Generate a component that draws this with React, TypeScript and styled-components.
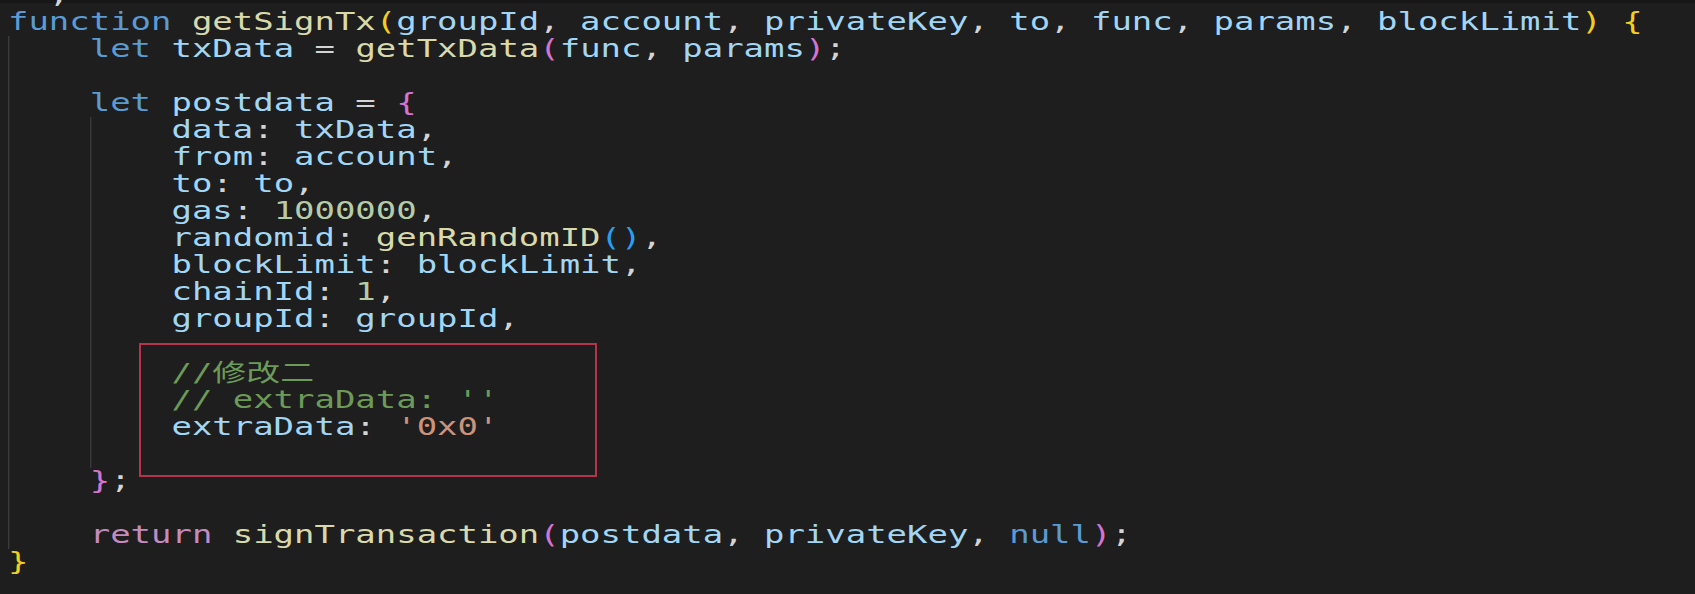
import React from "react";
import styled, { createGlobalStyle } from "styled-components";

const Global = createGlobalStyle`
  html, body {
    margin: 0;
    padding: 0;
    background: #1e1e1e;
    overflow: hidden;
  }
`;

type Kind = "kw" | "ctl" | "fn" | "v" | "p" | "b1" | "b2" | "b3" | "num" | "str" | "com";

const palette: Record<Kind, string> = {
  kw: "#5a9bd3",
  ctl: "#c38bbf",
  fn: "#d9d9ab",
  v: "#a2d6f5",
  p: "#d4d4d4",
  b1: "#f2cf1d",
  b2: "#d474d0",
  b3: "#2a9ef5",
  num: "#b6cca8",
  str: "#cc937a",
  com: "#6c9a58",
};

type Tok = [string, Kind];
interface CodeLine {
  g: number;
  t: Tok[];
}

const lines: CodeLine[] = [
  { g: 0, t: [["  ", "p"], [";", "p"]] },
  {
    g: 0,
    t: [
      ["function", "kw"], [" ", "p"], ["getSignTx", "fn"], ["(", "b1"],
      ["groupId", "v"], [", ", "p"], ["account", "v"], [", ", "p"],
      ["privateKey", "v"], [", ", "p"], ["to", "v"], [", ", "p"],
      ["func", "v"], [", ", "p"], ["params", "v"], [", ", "p"],
      ["blockLimit", "v"], [")", "b1"], [" ", "p"], ["{", "b1"],
    ],
  },
  {
    g: 1,
    t: [
      ["let", "kw"], [" ", "p"], ["txData", "v"], [" = ", "p"], ["getTxData", "fn"],
      ["(", "b2"], ["func", "v"], [", ", "p"], ["params", "v"], [")", "b2"], [";", "p"],
    ],
  },
  { g: 1, t: [] },
  { g: 1, t: [["let", "kw"], [" ", "p"], ["postdata", "v"], [" = ", "p"], ["{", "b2"]] },
  { g: 2, t: [["data", "v"], [": ", "p"], ["txData", "v"], [",", "p"]] },
  { g: 2, t: [["from", "v"], [": ", "p"], ["account", "v"], [",", "p"]] },
  { g: 2, t: [["to", "v"], [": ", "p"], ["to", "v"], [",", "p"]] },
  { g: 2, t: [["gas", "v"], [": ", "p"], ["1000000", "num"], [",", "p"]] },
  { g: 2, t: [["randomid", "v"], [": ", "p"], ["genRandomID", "fn"], ["()", "b3"], [",", "p"]] },
  { g: 2, t: [["blockLimit", "v"], [": ", "p"], ["blockLimit", "v"], [",", "p"]] },
  { g: 2, t: [["chainId", "v"], [": ", "p"], ["1", "num"], [",", "p"]] },
  { g: 2, t: [["groupId", "v"], [": ", "p"], ["groupId", "v"], [",", "p"]] },
  { g: 2, t: [] },
  { g: 2, t: [["//修改二", "com"]] },
  { g: 2, t: [["// extraData: ''", "com"]] },
  { g: 2, t: [["extraData", "v"], [": ", "p"], ["'0x0'", "str"]] },
  { g: 2, t: [] },
  { g: 1, t: [["}", "b2"], [";", "p"]] },
  { g: 1, t: [] },
  {
    g: 1,
    t: [
      ["return", "ctl"], [" ", "p"], ["signTransaction", "fn"], ["(", "b2"],
      ["postdata", "v"], [", ", "p"], ["privateKey", "v"], [", ", "p"],
      ["null", "kw"], [")", "b2"], [";", "p"],
    ],
  },
  { g: 0, t: [["}", "b1"]] },
];

const Editor = styled.div`
  position: relative;
  width: 1695px;
  height: 594px;
  overflow: hidden;
  background: #1e1e1e;
  box-shadow: inset 0 3px 0 #171717;
  padding-left: 8px;
  box-sizing: border-box;
`;

const Code = styled.div`
  margin-top: -18px;
  width: max-content;
  transform: scaleX(1.414);
  transform-origin: 0 0;
  font-family: "DejaVu Sans Mono", "Noto Sans CJK SC", monospace;
  font-size: 24px;
  line-height: 27px;
  white-space: pre;
`;

const Row = styled.div`
  height: 27px;
  display: block;
`;

const Guide = styled.span`
  display: inline-block;
  width: 4ch;
  height: 27px;
  vertical-align: top;
  box-sizing: border-box;
  border-left: 1px solid #3a3a3a;
`;

const Token = styled.span<{ $k: Kind }>`
  color: ${(p) => palette[p.$k]};
`;

const Highlight = styled.div`
  position: absolute;
  left: 139px;
  top: 343px;
  width: 458px;
  height: 134px;
  box-sizing: border-box;
  border: 2px solid #b5344a;
  pointer-events: none;
`;

export default function App() {
  return (
    <>
      <Global />
      <Editor>
        <Code>
          {lines.map((line, i) => (
            <Row key={i}>
              {Array.from({ length: line.g }).map((_, j) => (
                <Guide key={j} />
              ))}
              {line.t.map(([text, k], j) => (
                <Token key={j} $k={k}>
                  {text}
                </Token>
              ))}
            </Row>
          ))}
        </Code>
        <Highlight />
      </Editor>
    </>
  );
}
